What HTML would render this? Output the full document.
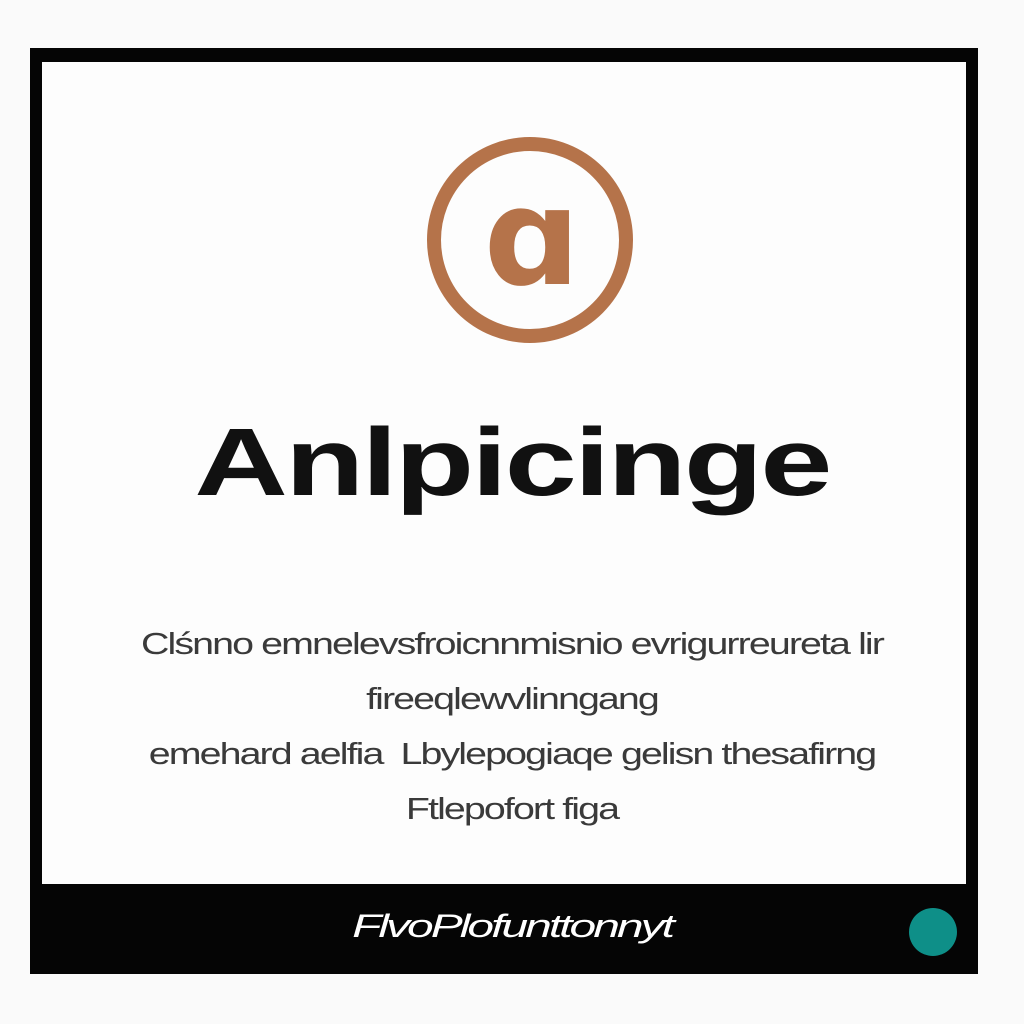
<!DOCTYPE html>
<html><head><meta charset="utf-8"><style>
body{margin:0;width:1024px;height:1024px;background:#fafafa;position:relative;overflow:hidden;font-family:"Liberation Sans",sans-serif}
.frame{position:absolute;left:30px;top:48px;width:948px;height:926px;background:#050505}
.inner{position:absolute;left:42px;top:62px;width:924px;height:822px;background:#fdfdfd}
.t{position:absolute;left:0;width:1024px;text-align:center;white-space:nowrap}
.title{top:408px;font-size:96px;font-weight:bold;color:#111;letter-spacing:-2px;transform:scaleX(1.35)}
.b{font-size:31px;color:#3a3a3a;letter-spacing:-1.5px;transform:scaleX(1.27)}
.foot{top:908px;font-size:32px;color:#fff;font-style:italic;letter-spacing:-2px;transform:scaleX(1.5)}
.dot{position:absolute;left:909px;top:908px;width:48px;height:48px;border-radius:50%;background:#0e8f88}
</style></head><body>
<div class="frame"></div><div class="inner"></div>
<svg style="position:absolute;left:420px;top:130px" width="220" height="220">
<circle cx="110" cy="110" r="96" fill="none" stroke="#b5734a" stroke-width="14"/>
<text x="112" y="154" text-anchor="middle" font-family="DejaVu Sans" font-weight="bold" font-size="135" fill="#b5734a">ɑ</text>
</svg>
<div class="t title">Anlpicinge</div>
<div class="t b" style="top:626px">Clśnno emnelevsfroicnnmisnio evrigurreureta lir</div>
<div class="t b" style="top:681px">fireeqlewvlinngang</div>
<div class="t b" style="top:736px">emehard aelfia &nbsp;Lbylepogiaqe gelisn thesafirng</div>
<div class="t b" style="top:791px">Ftlepofort figa</div>
<div class="t foot">FlvoPlofunttonnyt</div>
<div class="dot"></div>
</body></html>
